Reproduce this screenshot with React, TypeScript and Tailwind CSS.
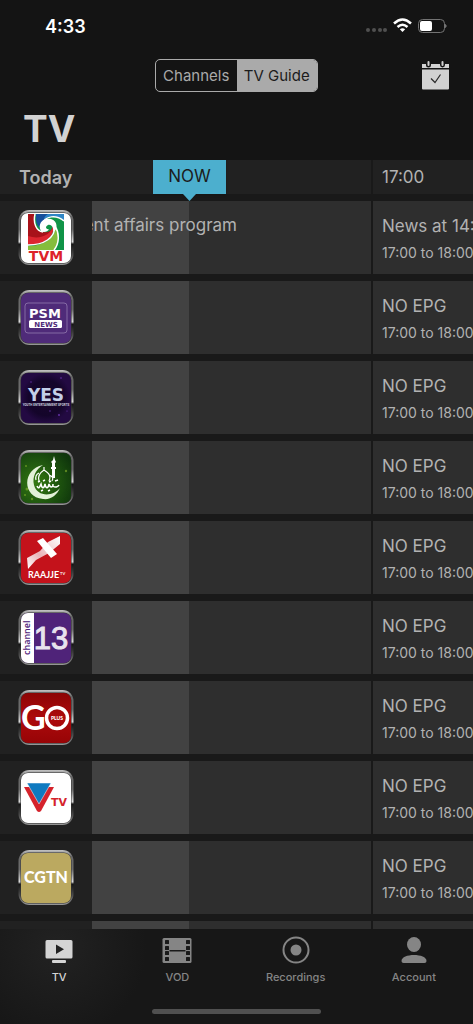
import type { ReactNode } from "react";

type Channel = {
    name: string;
    logo: ReactNode;
    current?: string;
    next?: string;
};

const WIDE = "'DejaVu Sans', sans-serif";
const LATO = "Lato, sans-serif";

const channels: Channel[] = [
    { name: "TVM", logo: <TvmLogo />, current: "Current affairs program", next: "News at 14:00" },
    { name: "PSM News", logo: <PsmLogo />, next: "NO EPG" },
    { name: "YES", logo: <YesLogo />, next: "NO EPG" },
    { name: "Munnaaru", logo: <MosqueLogo />, next: "NO EPG" },
    { name: "Raajje TV", logo: <RaajjeLogo />, next: "NO EPG" },
    { name: "Channel 13", logo: <Channel13Logo />, next: "NO EPG" },
    { name: "Go Plus", logo: <GoLogo />, next: "NO EPG" },
    { name: "VTV", logo: <VtvLogo />, next: "NO EPG" },
    { name: "CGTN", logo: <CgtnLogo />, next: "NO EPG" },
    { name: "Empty", logo: null },
];

function TvmLogo() {
    return (
        <>
            <rect x="3" y="4" width="50" height="50" fill="#fff" />
            <svg x="10" y="5" width="36" height="36" viewBox="0 0 36 36">
                <rect width="36" height="36" fill="#109447" />
                <path d="M0 0h7C5 9 8 17 15 18c6 1 9-2 10-6 1 11-10 18-25 18z" fill="#a8121a" />
                <path d="M0 22c12 4 23-1 25-10 2 12-10 19-25 19z" fill="#dc2630" />
                <path d="M0 36v-4c16 0 28-8 27-20 6 8 4 18-1 24z" fill="#85bd3c" />
                <path d="M8 0h28v7C28 0 17 2 14 10c-1 3 0 5 3 6C10 15 7 9 8 0z" fill="#174f9c" />
                <path d="M20 0h16v7C30 1 21 1 16 6q0-4 4-6z" fill="#2f86c6" />
                <path d="M7 0c-2 9 1 17 8 18M36 7C28 0 17 2 14 10M0 31c16 0 27-7 27-19M26 36c5-6 6-16 1-24" fill="none" stroke="#fff" strokeWidth="1.5" />
                <path d="M13 17c-4-7 2-14 10-12 7 2 7 10 2 13 1-5-2-8-5-7-4 2-1 5 1 4-1 3-6 4-8 2z" fill="#fff" />
            </svg>
            <text x="28" y="52" textAnchor="middle" fontFamily={WIDE} fontWeight="700" fontSize="14" fill="#dd2229">TVM</text>
        </>
    );
}

function PsmLogo() {
    return (
        <>
            <rect x="3" y="4" width="50" height="50" fill="#4f2b79" />
            <rect x="7" y="14" width="42" height="30" rx="3" fill="none" stroke="#9c85b8" strokeWidth=".7" />
            <text x="27" y="29" textAnchor="middle" fontFamily={WIDE} fontWeight="700" fontSize="13" fill="#fff">PSM</text>
            <rect x="11" y="31" width="33" height="8" rx="1.5" fill="#fff" />
            <text x="28" y="38" textAnchor="middle" fontFamily={WIDE} fontWeight="700" fontSize="7" fill="#4f2b79">NEWS</text>
        </>
    );
}

function YesLogo() {
    return (
        <>
            <rect x="3" y="4" width="50" height="50" fill="url(#night)" />
            <g fill="#6b36b0">
                <circle cx="13" cy="13" r=".7" />
                <circle cx="43" cy="9" r=".8" />
                <circle cx="32" cy="42" r=".7" />
                <circle cx="41" cy="46" r=".9" />
                <circle cx="49" cy="42" r=".6" />
            </g>
            <text x="28" y="32" textAnchor="middle" fontFamily={WIDE} fontWeight="700" fontSize="17" fill="#c3cfe8">YES</text>
            <text x="28" y="37" textAnchor="middle" fontFamily="Roboto, sans-serif" fontWeight="700" fontSize="3" fill="#c9cfdf">YOUTH ENTERTAINMENT SPORTS</text>
        </>
    );
}

function MosqueLogo() {
    return (
        <>
            <rect x="3" y="4" width="50" height="50" fill="url(#leaf)" />
            <g fill="#9cc832" opacity=".5">
                <circle cx="9" cy="40" r="1.5" />
                <circle cx="7" cy="46" r="1" />
                <circle cx="14" cy="50" r="1.2" />
                <circle cx="48" cy="22" r="1.2" />
                <circle cx="8" cy="17" r="1" />
            </g>
            <path d="M25 16C4 20 4 48 25 50c8 1 14-4 17-11-7 9-23 9-26-3-2-8 2-16 9-20z" fill="#e3f1d8" />
            <path d="M21 32c-2-6 2-9 5-11 3 2 8 5 5 11M18 31c-1-4 1-6 3-7M31 26c3 1 5 3 3 6M26 18v3" fill="none" stroke="#fff" strokeWidth="1.2" />
            <path d="M36 7l1 4 1 2-1 1v4h1v2h-1v9h-3v-9h-1v-2h1v-4l-1-1 2-2z" fill="#fff" />
            <path d="M19 37c2 4 3 0 4-2 1 5 3 5 4 0 1 5 3 5 4 0 1 4 4 4 4 0M35 37c2 2 5 1 6-1M20 33l2-1M25 32l2-1M31 33l2-1M37 32l3-1M23 42l2-1M30 42l2-1" fill="none" stroke="#fff" strokeWidth="1.5" />
        </>
    );
}

function RaajjeLogo() {
    return (
        <>
            <rect x="3" y="4" width="50" height="50" fill="#c4121b" />
            <path d="M42 7v8l-11 9-13 7-8 9-1-11 13-7 8-9z" fill="url(#ribbon)" />
            <path d="M19 12l6-3 14 16-6 4z" fill="#fff" />
            <text x="10" y="49" fontFamily={LATO} fontWeight="700" fontSize="9" fill="#fff">RAAJJE</text>
            <text x="42" y="46" fontFamily={LATO} fontWeight="700" fontSize="4" fill="#fff">TV</text>
        </>
    );
}

function Channel13Logo() {
    return (
        <>
            <rect x="3" y="4" width="50" height="50" fill="#4f2379" />
            <rect x="3" y="4" width="13" height="50" fill="#fff" />
            <text transform="translate(12 46) rotate(-90)" fontFamily="'Open Sans', sans-serif" fontWeight="600" fontSize="9" fill="#4f2379">channel</text>
            <text x="33" y="40" textAnchor="middle" fontFamily="'Liberation Sans', sans-serif" fontSize="31" fill="#e8e3ee" stroke="#e8e3ee" strokeWidth="1">13</text>
        </>
    );
}

function GoLogo() {
    return (
        <>
            <rect x="3" y="4" width="50" height="50" fill="url(#goRed)" />
            <text x="3" y="41" fontFamily={LATO} fontWeight="700" fontSize="34" fill="#fff">G</text>
            <circle cx="39" cy="29" r="10.5" fill="none" stroke="#fff" strokeWidth="3.5" />
            <text x="39" y="31" textAnchor="middle" fontFamily={LATO} fontWeight="900" fontSize="5" fill="#fff">PLUS</text>
        </>
    );
}

function VtvLogo() {
    return (
        <>
            <rect x="3" y="4" width="50" height="50" fill="#fff" />
            <path d="M6 18h30L23 42q-2 2-4 0z" fill="#d5232c" />
            <path d="M9 14h24L21 35z" fill="#0f7ac0" stroke="#fff" strokeWidth=".5" />
            <text x="41" y="37" textAnchor="middle" fontFamily={WIDE} fontWeight="700" fontSize="11" fill="#d5232c">TV</text>
        </>
    );
}

function CgtnLogo() {
    return (
        <>
            <rect x="3" y="4" width="50" height="50" fill="#bba960" />
            <text x="28" y="34" textAnchor="middle" fontFamily={LATO} fontWeight="900" fontSize="16" fill="#fff">CGTN</text>
        </>
    );
}

// Shared gradients for the logo tiles
function LogoDefs() {
    return (
        <svg width="0" height="0" className="absolute" aria-hidden="true">
            <defs>
                <linearGradient id="metal" x1="0" y1="0" x2="0" y2="1">
                    <stop offset="0" stopColor="#c4c4c4" />
                    <stop offset=".12" stopColor="#666" />
                    <stop offset=".35" stopColor="#6d6d6d" />
                    <stop offset=".58" stopColor="#dedede" />
                    <stop offset=".62" stopColor="#151515" />
                    <stop offset=".85" stopColor="#555" />
                    <stop offset="1" stopColor="#999" />
                </linearGradient>
                <clipPath id="tile">
                    <rect x="3" y="4" width="50" height="50" rx="7" />
                </clipPath>
                <radialGradient id="night">
                    <stop offset="0" stopColor="#18062c" />
                    <stop offset=".7" stopColor="#14052a" />
                    <stop offset="1" stopColor="#230a42" />
                </radialGradient>
                <radialGradient id="leaf" cx=".3" cy=".6" r=".8">
                    <stop offset="0" stopColor="#357a12" />
                    <stop offset=".6" stopColor="#1d520f" />
                    <stop offset="1" stopColor="#0f360c" />
                </radialGradient>
                <linearGradient id="ribbon" x1="1" y1="0" x2="0" y2="1">
                    <stop offset="0" stopColor="#fff" />
                    <stop offset=".6" stopColor="#e9b4b9" />
                    <stop offset="1" stopColor="#fff" />
                </linearGradient>
                <linearGradient id="goRed" x1="0" y1="0" x2="0" y2="1">
                    <stop offset="0" stopColor="#8c0505" />
                    <stop offset=".5" stopColor="#ad0a0c" />
                    <stop offset="1" stopColor="#970406" />
                </linearGradient>
            </defs>
        </svg>
    );
}

function StatusBar() {
    return (
        <div className="flex h-[52px] items-center justify-between pl-[45px] pr-[26px]">
            <span className="text-[18px] font-semibold text-white">4:33</span>
            <svg width="84" height="18" viewBox="0 0 84 18" aria-hidden="true">
                <g fill="#505050">
                    <circle cx="5" cy="13" r="2" />
                    <circle cx="11" cy="13" r="2" />
                    <circle cx="17" cy="13" r="2" />
                    <circle cx="22" cy="13" r="2" />
                </g>
                <g fill="none" stroke="#fff" strokeWidth="2.5">
                    <path d="M31 6.5q8.500-8 17 0" />
                    <path d="M34.500 10q5-4.500 10 0" />
                </g>
                <path d="M36.800 12.300q2.700-2 5.400 0l-2.700 2.800z" fill="#fff" />
                <rect x="55.500" y="2.500" width="26" height="13" rx="4" fill="none" stroke="#737373" />
                <rect x="57" y="4" width="12" height="10" rx="2" fill="#fff" />
                <path d="M82.500 7.500q1.500 1.500 0 3z" fill="#737373" stroke="#737373" />
            </svg>
        </div>
    );
}

function CalendarIcon() {
    return (
        <svg width="27" height="29" viewBox="0 0 27 29" aria-hidden="true">
            <path d="M0 3h4v1a2 2 0 0 0 5 0V3h9v1a2 2 0 0 0 5 0V3h4v4H0zM0 8.500h27v19a1 1 0 0 1-1 1H1a1 1 0 0 1-1-1z" fill="#d2d2d2" />
            <rect x="5.500" y="0" width="2" height="5" rx="1" fill="#d2d2d2" />
            <rect x="19.500" y="0" width="2" height="5" rx="1" fill="#d2d2d2" />
            <path d="M9 17.500l4 4 5.500-8" fill="none" stroke="#2a2a2a" strokeWidth="1.200" />
        </svg>
    );
}

function TimeHeader() {
    return (
        <div className="flex h-[34px] shrink-0 bg-[#212121]">
            <h2 className="flex w-[92px] shrink-0 items-center pl-[19px] text-[18px] font-semibold text-[#b2b2b2]">Today</h2>
            <div className="relative w-[279px] shrink-0">
                <div className="absolute left-[61px] top-0 z-10 flex h-[34px] w-[73px] items-center justify-center bg-[#4cafce] text-[17px] text-[#1c1c1c] shadow">
                    NOW
                    <svg className="absolute left-[30px] top-[34px]" width="13" height="7" viewBox="0 0 13 7" aria-hidden="true">
                        <path d="M0 0h13L6.500 7z" fill="#4cafce" />
                    </svg>
                </div>
            </div>
            <div className="flex flex-1 items-center border-l-2 border-[#191919] pl-[9px] pt-[2px] text-[17px] text-[#b2b2b2]">17:00</div>
        </div>
    );
}

function ChannelRow({ channel }: { channel: Channel }) {
    return (
        <li className="flex h-[73px] shrink-0 bg-[#212121] text-[#b2b2b2]">
            <div className="w-[92px] shrink-0 pl-[18px] pt-2">
                {channel.logo && (
                    <svg width="56" height="56" viewBox="0 0 56 56" role="img" aria-label={channel.name}>
                        <rect x=".5" y="1" width="55" height="55" rx="11" fill="url(#metal)" />
                        <rect x="2.5" y="3.5" width="51" height="51" rx="8" fill="#333" />
                        <g clipPath="url(#tile)">{channel.logo}</g>
                    </svg>
                )}
            </div>
            <div className="w-[279px] shrink-0 bg-[#2e2e2e]">
                <div className="h-full w-[97px] bg-[#424242]">
                    {channel.current && (
                        <p className="flex h-[50px] w-[145px] items-center justify-end overflow-hidden whitespace-nowrap text-[17px]">{channel.current}</p>
                    )}
                </div>
            </div>
            <div className="min-w-0 flex-1 overflow-hidden whitespace-nowrap border-l-2 border-[#191919] bg-[#2e2e2e] pl-[9px] pt-[13px]">
                {channel.next && (
                    <>
                        <p className="text-[17px] leading-6">{channel.next}</p>
                        <p className="mt-[3px] text-[14px] leading-6">17:00 to 18:00</p>
                    </>
                )}
            </div>
        </li>
    );
}

const tabs = [
    {
        label: "TV",
        active: true,
        icon: (
            <>
                <path fillRule="evenodd" d="M3 5h24a1.500 1.500 0 0 1 1.500 1.500v15.500a1.500 1.500 0 0 1-1.500 1.500H3A1.500 1.500 0 0 1 1.500 22V6.500A1.500 1.500 0 0 1 3 5zm9 4.500v9.500l8-4.700z" />
                <rect x="8" y="25" width="14" height="3" rx="1" />
            </>
        ),
    },
    {
        label: "VOD",
        active: false,
        icon: (
            <>
                <rect x=".5" y="3" width="29" height="25" rx="1.500" />
                <g fill="#1a1a1a">
                    {[5, 11, 16, 22].map((y) => (
                        <g key={y}>
                            <rect x="3" y={y} width="4" height="4" rx=".5" />
                            <rect x="24" y={y} width="4" height="4" rx=".5" />
                        </g>
                    ))}
                    <rect x="7.500" y="15" width="16" height="1.500" />
                </g>
            </>
        ),
    },
    {
        label: "Recordings",
        active: false,
        icon: (
            <>
                <circle cx="15" cy="15" r="12.500" fill="none" stroke="currentColor" strokeWidth="2" />
                <circle cx="15" cy="15" r="5.500" />
            </>
        ),
    },
    {
        label: "Account",
        active: false,
        icon: (
            <>
                <ellipse cx="15" cy="9.500" rx="7" ry="7.500" />
                <path d="M2.500 26c0-4 6-6 12.500-6s12.500 2 12.500 6q0 2-2 2h-21q-2 0-2-2z" />
            </>
        ),
    },
];

function TabBar() {
    return (
        <footer className="shrink-0 bg-[#171717] bg-[radial-gradient(circle_at_12%_20%,#222_0,#171717_90px)] pb-[10px]">
            <nav className="grid grid-cols-4 pt-[6px]">
                {tabs.map((tab) => (
                    <button
                        key={tab.label}
                        type="button"
                        className={`flex h-[74px] flex-col items-center text-[11px] font-medium leading-4 ${tab.active ? "text-[#d4d4d4]" : "text-[#858585]"}`}
                    >
                        <svg width="30" height="30" viewBox="0 0 30 30" fill="currentColor" aria-hidden="true">
                            {tab.icon}
                        </svg>
                        <span className="mt-1">{tab.label}</span>
                    </button>
                ))}
            </nav>
            <div className="mx-auto h-[5px] w-[169px] rounded-full bg-[#505050]" />
        </footer>
    );
}

export default function App() {
    return (
        <div className="flex h-screen flex-col overflow-hidden bg-[#191919] font-['Inter',sans-serif]">
            <LogoDefs />

            <header className="shrink-0 bg-[#141414]">
                <StatusBar />
                <div className="grid h-[46px] grid-cols-[1fr_auto_1fr] items-center px-6">
                    <div className="col-start-2 grid h-[33px] w-[163px] grid-cols-2 overflow-hidden rounded-[5px] border border-[#aaaaaa] text-[15px]">
                        <button type="button" className="pt-[2px] text-[#aaaaaa]">Channels</button>
                        <button type="button" className="bg-[#aaaaaa] pt-[2px] text-[#1c1c1c]">TV Guide</button>
                    </div>
                    <button type="button" aria-label="Schedule" className="justify-self-end">
                        <CalendarIcon />
                    </button>
                </div>
                <h1 className="h-[62px] pl-[23px] text-[37px] font-bold leading-[62px] text-[#d2d2d2]">TV</h1>
            </header>

            <main className="flex min-h-0 flex-1 flex-col overflow-hidden">
                <TimeHeader />
                <ul className="mt-[7px] flex flex-col gap-[7px]">
                    {channels.map((channel) => (
                        <ChannelRow key={channel.name} channel={channel} />
                    ))}
                </ul>
            </main>

            <TabBar />
        </div>
    );
}
